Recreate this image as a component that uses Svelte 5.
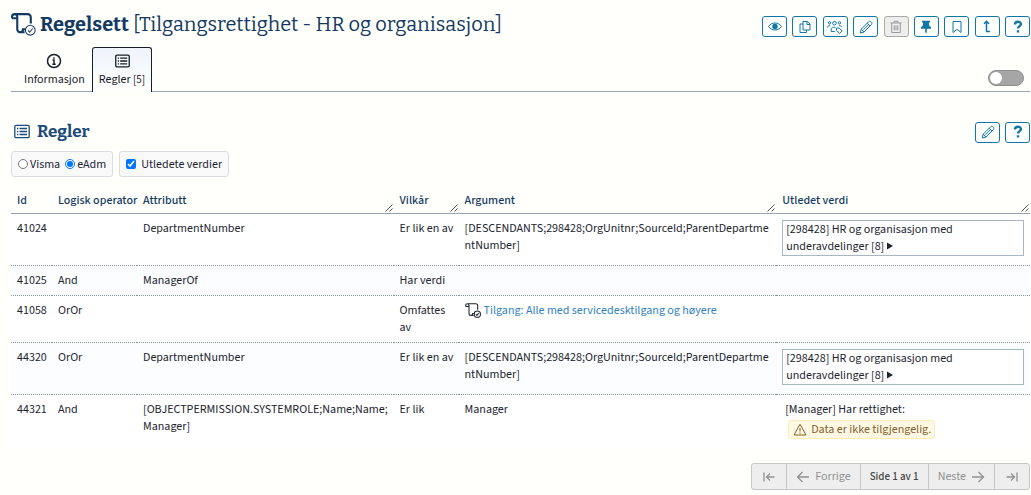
<script>
  /** Rule set page: title with action buttons, tabs, and the table of rules. */
  let source = $state('eAdm');
  let showDerived = $state(true);
  let expert = $state(false);

  const actions = [
    { icon: 'eye', label: 'Vis' },
    { icon: 'copy', label: 'Kopier' },
    { icon: 'people', label: 'Medlemmer' },
    { icon: 'pencil', label: 'Rediger' },
    { icon: 'trash', label: 'Slett', disabled: true },
    { icon: 'pin', label: 'Fest' },
    { icon: 'bookmark', label: 'Bokmerke' },
    { icon: 'up', label: 'Opp' },
    { icon: 'help', label: 'Hjelp' }
  ];

  const sectionActions = [
    { icon: 'pencil', label: 'Rediger regler' },
    { icon: 'help', label: 'Hjelp om regler' }
  ];

  const columns = [
    { name: 'Id', cls: 'id' },
    { name: 'Logisk operator', cls: 'operator' },
    { name: 'Attributt', cls: 'attribute', resizable: true },
    { name: 'Vilkår', cls: 'condition', resizable: true },
    { name: 'Argument', cls: 'argument', resizable: true },
    { name: 'Utledet verdi', cls: 'derived', resizable: true }
  ];

  const descendants = '[DESCENDANTS;298428;OrgUnitnr;SourceId;ParentDepartmentNumber]';
  const orgUnit = '[298428] HR og organisasjon med underavdelinger [8]';

  const rules = [
    { id: 41024, operator: '', attribute: 'DepartmentNumber', condition: 'Er lik en av', argument: descendants, unit: orgUnit },
    { id: 41025, operator: 'And', attribute: 'ManagerOf', condition: 'Har verdi', argument: '' },
    { id: 41058, operator: 'OrOr', attribute: '', condition: 'Omfattes av', link: 'Tilgang: Alle med servicedesktilgang og høyere' },
    { id: 44320, operator: 'OrOr', attribute: 'DepartmentNumber', condition: 'Er lik en av', argument: descendants, unit: orgUnit },
    {
      id: 44321,
      operator: 'And',
      attribute: '[OBJECTPERMISSION.SYSTEMROLE;Name;Name;Manager]',
      condition: 'Er lik',
      argument: 'Manager',
      note: '[Manager] Har rettighet:',
      warning: 'Data er ikke tilgjengelig.'
    }
  ];
</script>

{#snippet scroll(cls)}
  <svg class={cls} viewBox="0 0 24 22" aria-hidden="true">
    <path d="M1 5V3.500a2.500 2.500 0 0 1 5 0V15.500a3 3 0 0 0 3 3h4M1 5h5M3.500 1H16a3 3 0 0 1 3 3v6M9 18.500a3 3 0 0 0 2.500-3H14" />
    <circle cx="18.500" cy="16.500" r="4.700" />
    <path class="thin" d="M16.300 16.700l1.600 1.700 2.900-3.600" />
  </svg>
{/snippet}

{#snippet list(cls)}
  <svg class={cls} viewBox="0 0 16 14" aria-hidden="true">
    <rect x="0.800" y="0.800" width="14.400" height="12.400" rx="1.300" />
    <path d="M5.500 4H13M5.500 7H13M5.500 10H13M3 4h1.300M3 7h1.300M3 10h1.300" />
  </svg>
{/snippet}

{#snippet arrow(kind)}
  <svg class="arrow" viewBox="0 0 14 12" aria-hidden="true">
    {#if kind === 'first'}
      <path d="M2 1.500v9M12.500 6H4.500M8 2.500L4.500 6 8 9.500" />
    {:else if kind === 'last'}
      <path d="M12 1.500v9M1.500 6h8M6 2.500L9.500 6 6 9.500" />
    {:else if kind === 'prev'}
      <path d="M13 6H2M6.500 1L1.500 6l5 5" />
    {:else}
      <path d="M1 6h11M7.500 1l5 5-5 5" />
    {/if}
  </svg>
{/snippet}

{#snippet action(item)}
  <button class="action" type="button" aria-label={item.label} disabled={item.disabled}>
    <svg viewBox="0 0 16 14" aria-hidden="true">
      {#if item.icon === 'eye'}
        <path d="M1.500 6.500C4.500 1.800 11.500 1.800 14.500 6.500 11.500 11.200 4.500 11.200 1.500 6.500z" />
        <circle class="solid" cx="8" cy="6.500" r="2.700" />
      {:else if item.icon === 'copy'}
        <path d="M6 1.500h4.500L13 4v6H6zM10 1.500V4.500h3M6 4H3v8.500h6.500V10" />
      {:else if item.icon === 'people'}
        <circle cx="2.500" cy="2.800" r="1.200" />
        <circle cx="7.500" cy="3.200" r="1.800" />
        <circle cx="12.500" cy="2.800" r="1.200" />
        <path d="M.6 7.500c0-1.500.9-2 2.600-1.800M14.400 7.200c0-1.200-.9-1.700-2.600-1.500M8.500 7.300H6.200c-1.300 0-2 .8-2 2V11.500h3.500M9.500 8h2.600l3 3-2.400 2.400-3.200-3z" />
      {:else if item.icon === 'pencil'}
        <path d="M2.300 13l.9-3.800 7.500-7.500c1.500-1.500 4.300 1.200 2.800 2.800L6 12.100zM3.200 9.200L6 12.100M9.200 3.200L12 6M5.500 9.800l4.800-4.900" />
      {:else if item.icon === 'trash'}
        <path d="M2.500 3h11M6 3V1.300h4V3M3.700 3v9.500h8.600V3M6.200 5.300v5M8 5.300v5M9.800 5.300v5" />
      {:else if item.icon === 'pin'}
        <path class="solid" d="M4 .8h8v1.800h-1.200l.5 3.300 1.700 1.200v1.700H8.800V12L8 13.500 7.200 12V8.800H3V7.100l1.700-1.200.5-3.300H4z" />
      {:else if item.icon === 'bookmark'}
        <path d="M4 1.500h8v11L8 9.300l-4 3.200z" />
      {:else if item.icon === 'up'}
        <path class="heavy" d="M7.500 1.500v10H11M5 3.700l2.500-2.500L10 3.700" />
      {:else}
        <path class="mark" d="M4.900 4.500c.2-3.700 6.200-3.500 6-.3C10.800 6.300 8 6 8 8.600M8 10.300v2.200" />
      {/if}
    </svg>
  </button>
{/snippet}

<main>
  <header>
    <h1>
      {@render scroll('title-icon')}
      <span><b>Regelsett</b> [Tilgangsrettighet - HR og organisasjon]</span>
    </h1>
    <div class="actions">
      {#each actions as item}
        {@render action(item)}
      {/each}
    </div>
  </header>

  <nav>
    <a class="tab" href="#informasjon">
      <svg class="info" viewBox="0 0 16 16" aria-hidden="true">
        <circle cx="8" cy="8" r="6.500" />
        <path d="M6.500 7H8v4M6.300 11.200h3.400M8 4.200v1.600" />
      </svg>
      Informasjon
    </a>
    <a class="tab active" href="#regler" aria-current="page">
      {@render list('list-icon')}
      <span>Regler <small>[5]</small></span>
    </a>
    <label class="switch">
      <input type="checkbox" role="switch" aria-label="Avansert visning" bind:checked={expert} />
    </label>
  </nav>

  <section>
    <div class="section-head">
      <h2>{@render list('heading-icon')}Regler</h2>
      <div class="section-actions">
        {#each sectionActions as item}
          {@render action(item)}
        {/each}
      </div>
    </div>

    <div class="filters">
      <div class="group">
        <label><input type="radio" name="source" value="Visma" bind:group={source} />Visma</label>
        <label><input type="radio" name="source" value="eAdm" bind:group={source} />eAdm</label>
      </div>
      <div class="group">
        <label class="check"><input type="checkbox" bind:checked={showDerived} />Utledete verdier</label>
      </div>
    </div>

    <table>
      <thead>
        <tr>
          {#each columns as col}
            <th class={col.cls} scope="col">
              {col.name}
              {#if col.resizable}
                <svg class="grip" viewBox="0 0 8 8" aria-hidden="true"><path d="M.5 7.500l7-7M4.500 7.500l3-3" /></svg>
              {/if}
            </th>
          {/each}
        </tr>
      </thead>
      <tbody>
        {#each rules as rule}
          <tr>
            <td>{rule.id}</td>
            <td>{rule.operator}</td>
            <td class="break">{rule.attribute}</td>
            <td>{rule.condition}</td>
            <td class="break">
              {#if rule.link}
                <a class="rule-link" href="#tilgang">{@render scroll('link-icon')}{rule.link}</a>
              {:else}
                {rule.argument}
              {/if}
            </td>
            <td class="value">
              {#if showDerived && rule.unit}
                <button class="unit" type="button">{rule.unit} <svg class="caret" viewBox="0 0 6 8" aria-hidden="true"><path d="M0 0.500L6 4 0 7.500z" /></svg></button>
              {:else if showDerived && rule.note}
                <div class="note">{rule.note}</div>
                <div class="warning">
                  <svg viewBox="0 0 14 13" aria-hidden="true">
                    <path d="M7 1.200L13 12H1zM7 5v3.500M7 9.500v1.200" />
                  </svg>
                  {rule.warning}
                </div>
              {/if}
            </td>
          </tr>
        {/each}
      </tbody>
    </table>

    <div class="pager">
      <button type="button" disabled aria-label="Første side">{@render arrow('first')}</button>
      <button type="button" disabled>{@render arrow('prev')}Forrige</button>
      <span class="current">Side 1 av 1</span>
      <button type="button" disabled>Neste{@render arrow('next')}</button>
      <button type="button" disabled aria-label="Siste side">{@render arrow('last')}</button>
    </div>
  </section>
</main>

<style>
  :global(body) {
    background: #fffffc;
  }
  main {
    box-sizing: border-box;
    padding: 8px 1px 4px 11px;
    font-family: "Source Sans 3", "Noto Sans CJK JP", "Noto Sans", sans-serif;
    font-size: 12px;
    line-height: 17px;
    color: #1c2530;
  }
  button,
  input {
    font: inherit;
    margin: 0;
  }
  svg {
    fill: none;
    stroke: currentColor;
    flex: none;
  }
  header {
    display: flex;
    justify-content: space-between;
    height: 40px;
  }
  h1,
  h2 {
    margin: 0;
    display: flex;
    align-items: center;
    font-family: Bitter, "DejaVu Serif Condensed", "DejaVu Serif", serif;
    color: #143a63;
  }
  h1 {
    gap: 4px;
    height: 32px;
    font-size: 20px;
    font-weight: 400;
    white-space: nowrap;
  }
  .title-icon {
    width: 25px;
    height: 23px;
    stroke-width: 2;
  }
  .title-icon .thin {
    stroke-width: 1;
  }
  .title-icon circle {
    stroke-width: 1;
  }
  .actions {
    display: flex;
    justify-content: space-between;
    width: 268px;
    padding-top: 8px;
  }
  .action {
    box-sizing: border-box;
    width: 25px;
    height: 21px;
    padding: 0;
    display: flex;
    align-items: center;
    justify-content: center;
    color: #0f76a8;
    background: #fffffe;
    border: 1px solid #0f76a8;
    border-radius: 3px;
  }
  .action svg {
    width: 16px;
    height: 14px;
    stroke-width: 1;
  }
  .action:disabled {
    color: #999;
    background: #eee;
    border-color: #aaa;
  }
  .solid {
    fill: currentColor;
    stroke: none;
  }
  .heavy {
    stroke-width: 1.5;
  }
  .mark {
    stroke-width: 2.4;
  }

  nav {
    display: flex;
    align-items: flex-end;
    height: 43px;
    border-bottom: 1px solid #97a5b1;
  }
  .tab {
    box-sizing: border-box;
    height: 45px;
    margin-bottom: -1px;
    padding: 5px 6px 0;
    display: flex;
    flex-direction: column;
    align-items: center;
    gap: 2px;
    color: #17202a;
    text-decoration: none;
    border: 1px solid transparent;
    border-bottom: 0;
    border-radius: 3px 3px 0 0;
  }
  .tab:first-child {
    margin-left: 6px;
  }
  .tab.active {
    border-color: #17202a;
    background: linear-gradient(#eff4fb, #fffffc);
  }
  .tab small {
    font-size: 11px;
  }
  .info {
    width: 16px;
    height: 16px;
    stroke-width: 1.5;
  }
  .list-icon {
    width: 15px;
    height: 16px;
    stroke-width: 1.4;
  }
  .switch {
    margin: 0 6px 5px auto;
    display: flex;
  }
  .switch input {
    appearance: none;
    box-sizing: border-box;
    width: 36px;
    height: 16px;
    padding: 1px;
    display: flex;
    background: #a6a6a6;
    border: 1px solid #8e8e8e;
    border-radius: 8px;
  }
  .switch input::before {
    content: "";
    width: 12px;
    height: 12px;
    border-radius: 50%;
    background: #fff;
  }
  .switch input:checked {
    justify-content: flex-end;
    background: #0f76a8;
  }

  .section-head {
    display: flex;
    align-items: center;
    justify-content: space-between;
    margin-top: 29px;
    height: 22px;
  }
  h2 {
    gap: 7px;
    height: 20px;
    align-self: flex-start;
    padding-left: 3px;
    font-size: 17px;
    font-weight: 700;
    color: #1b4a7c;
  }
  .heading-icon {
    width: 16px;
    height: 15px;
    stroke-width: 1.3;
  }
  .section-actions {
    display: flex;
    gap: 5px;
  }
  .filters {
    display: flex;
    gap: 6px;
    margin-top: 8px;
  }
  .group {
    box-sizing: border-box;
    height: 26px;
    padding: 0 6px;
    display: flex;
    align-items: center;
    gap: 5px;
    background: #f9f9fa;
    border: 1px solid #dcdde3;
    border-radius: 3px;
  }
  .group label {
    display: flex;
    align-items: center;
    gap: 2px;
  }
  .group .check {
    gap: 5px;
  }
  .group input {
    width: 10px;
    height: 10px;
  }

  table {
    width: 100%;
    margin-top: 11px;
    table-layout: fixed;
    border-collapse: collapse;
  }
  th {
    position: relative;
    padding: 4px 6px;
    text-align: left;
    font-weight: 500;
    color: #143a63;
    white-space: nowrap;
    border-bottom: 1px solid #97a5b1;
  }
  .id {
    width: 29px;
  }
  .operator {
    width: 73px;
  }
  .attribute {
    width: 24%;
  }
  .condition {
    width: 53px;
  }
  .argument {
    width: 30%;
  }
  .grip {
    position: absolute;
    right: 1px;
    bottom: 1px;
    width: 8px;
    height: 8px;
    stroke: #555;
  }
  td {
    padding: 6px 2px 6px 6px;
    vertical-align: top;
    border-bottom: 1px dotted #8492a0;
  }
  .value {
    padding-right: 6px;
  }
  tbody tr {
    background: #fff;
  }
  tbody tr:nth-child(even) {
    background: #fbfdfe;
  }
  tbody tr:last-child td {
    border-bottom: 0;
  }
  .break {
    word-break: break-all;
  }
  .rule-link {
    display: flex;
    align-items: center;
    gap: 3px;
    color: #2f7fbf;
    text-decoration: none;
    word-break: normal;
  }
  .link-icon {
    width: 16px;
    height: 15px;
    color: #1c2530;
    stroke-width: 1.6;
  }
  .unit {
    display: block;
    box-sizing: border-box;
    width: 100%;
    margin-bottom: 3px;
    padding: 0 3px;
    text-align: left;
    color: inherit;
    background: #fff;
    border: 1px solid #a9b7c3;
  }
  .caret {
    width: 6px;
    height: 8px;
    fill: currentColor;
    stroke: none;
  }
  .note {
    padding-left: 3px;
  }
  .warning {
    box-sizing: border-box;
    width: fit-content;
    height: 19px;
    margin: 2px 0 3px 6px;
    padding: 0 3px 0 4px;
    display: flex;
    align-items: center;
    gap: 4px;
    color: #7f6230;
    background: #fff8e2;
    border: 1px solid #ffeaba;
    border-radius: 3px;
  }
  .warning svg {
    width: 14px;
    height: 13px;
  }

  .pager {
    display: flex;
    width: fit-content;
    margin: 15px 0 0 auto;
    background: #eee;
    border: 1px solid #c6c6c6;
    border-radius: 3px;
  }
  .pager > * {
    box-sizing: border-box;
    height: 25px;
    padding: 0 9px;
    display: flex;
    align-items: center;
    gap: 5px;
    border: 0;
    border-left: 1px solid #c6c6c6;
    background: none;
    color: #929292;
  }
  .pager > :first-child {
    padding: 0 10px;
    border-left: 0;
  }
  .pager > :last-child {
    padding: 0 10px;
  }
  .pager .current {
    color: #444;
    font-size: 11px;
    font-weight: 500;
  }
  .arrow {
    width: 14px;
    height: 12px;
    stroke-width: 1.3;
  }
</style>
